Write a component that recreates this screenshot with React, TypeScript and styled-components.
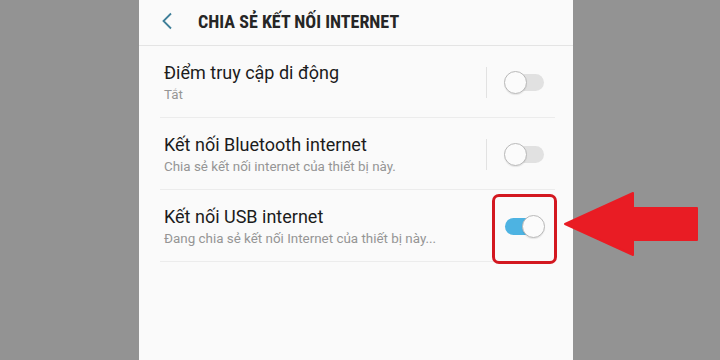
import React from "react";
import styled, { createGlobalStyle } from "styled-components";

const Global = createGlobalStyle`
  html, body { margin: 0; padding: 0; }
  body { background: #939393; font-family: Roboto, "Noto Sans", sans-serif; }
`;

const Stage = styled.div`
  position: relative;
  width: 720px;
  height: 360px;
  display: flex;
  background: #939393;
  overflow: hidden;
`;

const Gutter = styled.div<{ $w: number }>`
  width: ${(p) => p.$w}px;
  flex: none;
`;

const Screen = styled.div`
  width: 434px;
  flex: none;
  background: #fafafa;
  display: flex;
  flex-direction: column;
`;

const Header = styled.div`
  height: 46px;
  display: flex;
  align-items: center;
  border-bottom: 1px solid #e4e4e4;
  box-sizing: border-box;
  padding-left: 22px;
  padding-bottom: 3px;
`;

const Back = styled.svg`
  width: 12px;
  height: 18px;
  margin-right: 25px;
`;

const Title = styled.div`
  font-family: "Liberation Sans Narrow", "Roboto Condensed", Roboto, sans-serif;
  font-weight: 700;
  font-size: 18px;
  color: #262626;
`;

const List = styled.div`
  display: flex;
  flex-direction: column;
  padding: 0 18px 0 21px;
`;

const Row = styled.div`
  height: 72px;
  box-sizing: border-box;
  border-bottom: 1px solid #ececec;
  display: flex;
  align-items: center;
  padding: 1px 11px 0 4px;
`;

const Texts = styled.div`
  flex: 1;
  display: flex;
  flex-direction: column;
`;

const ItemTitle = styled.div`
  font-size: 18px;
  line-height: 24px;
  color: #1c1c1c;
`;

const ItemSub = styled.div`
  font-size: 13.4px;
  line-height: 18px;
  margin-top: 1px;
  color: #959595;
`;

const VLine = styled.div<{ $hidden?: boolean }>`
  width: 1px;
  height: 31px;
  background: ${(p) => (p.$hidden ? "transparent" : "#e2e2e2")};
  margin-right: 17px;
`;

const Switch = styled.div`
  position: relative;
  width: 40px;
  height: 23px;
  flex: none;
`;

const Track = styled.div<{ $on?: boolean }>`
  position: absolute;
  left: 1px;
  right: 0;
  top: 3px;
  bottom: 3px;
  border-radius: 9px;
  background: ${(p) => (p.$on ? "#4db3e2" : "#e1e1e1")};
`;

const Knob = styled.div<{ $on?: boolean }>`
  position: absolute;
  top: 0;
  ${(p) => (p.$on ? "right: -1px;" : "left: 0;")}
  width: 21px;
  height: 21px;
  border-radius: 50%;
  background: #fbfbfb;
  border: 1px solid #b9b9b9;
  box-shadow: 0 1px 1px rgba(0,0,0,0.08);
`;

const Highlight = styled.div`
  position: relative;
  &::before {
    content: "";
    position: absolute;
    left: -12px;
    right: -13px;
    top: -21px;
    bottom: -26px;
    border: 3px solid #d31820;
    border-radius: 7px;
  }
`;

const Arrow = styled.svg`
  position: absolute;
  left: 0;
  top: 0;
  pointer-events: none;
`;

const Toggle = ({ on }: { on?: boolean }) => (
  <Switch>
    <Track $on={on} />
    <Knob $on={on} />
  </Switch>
);

export default function App() {
  return (
    <>
      <Global />
      <Stage>
        <Gutter $w={139} />
        <Screen>
          <Header>
            <Back viewBox="0 0 12 18">
              <path d="M10 1.5 L2.5 9 L10 16.5" fill="none" stroke="#3f7f99" strokeWidth="1.8" />
            </Back>
            <Title>CHIA SẺ KẾT NỐI INTERNET</Title>
          </Header>
          <List>
            <Row>
              <Texts>
                <ItemTitle>Điểm truy cập di động</ItemTitle>
                <ItemSub>Tắt</ItemSub>
              </Texts>
              <VLine />
              <Toggle />
            </Row>
            <Row>
              <Texts>
                <ItemTitle>Kết nối Bluetooth internet</ItemTitle>
                <ItemSub>Chia sẻ kết nối internet của thiết bị này.</ItemSub>
              </Texts>
              <VLine />
              <Toggle />
            </Row>
            <Row>
              <Texts>
                <ItemTitle>Kết nối USB internet</ItemTitle>
                <ItemSub>Đang chia sẻ kết nối Internet của thiết bị này...</ItemSub>
              </Texts>
              <VLine $hidden />
              <Highlight>
                <Toggle on />
              </Highlight>
            </Row>
          </List>
        </Screen>
        <Gutter $w={147} />
        <Arrow width="720" height="360" viewBox="0 0 720 360">
          <polygon
            points="565,224 633,193 633,208 697,208 697,240 633,240 633,255"
            fill="#e91c24"
            stroke="#e91c24"
            strokeWidth="2"
            strokeLinejoin="round"
          />
        </Arrow>
      </Stage>
    </>
  );
}
